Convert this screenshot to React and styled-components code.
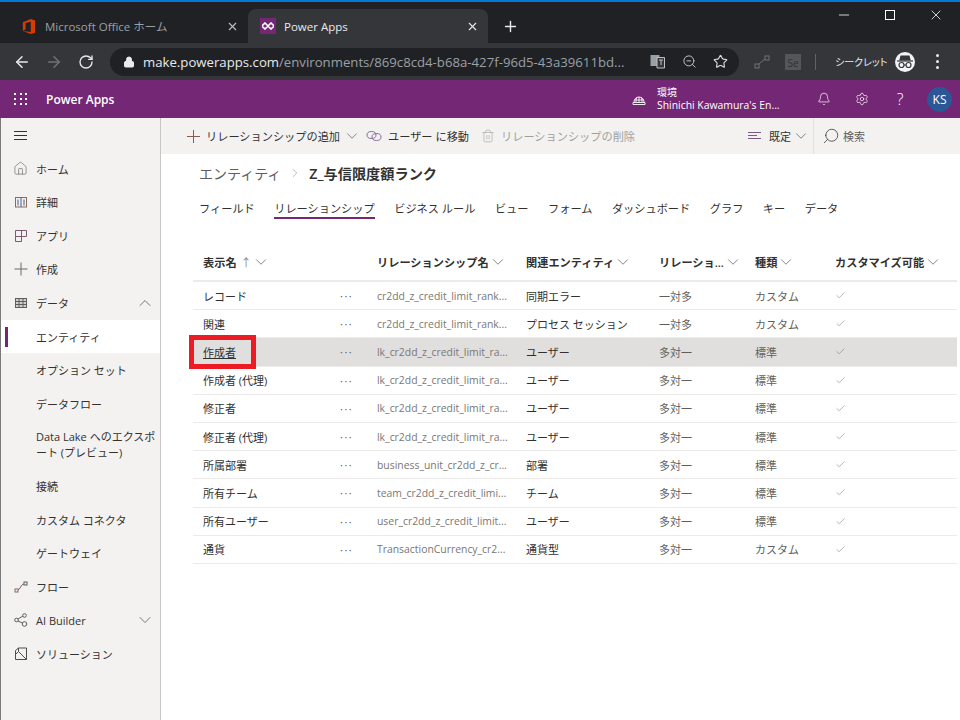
import styled, { createGlobalStyle } from "styled-components";
import {
  ArrowLeft,
  ArrowRight,
  RotateCw,
  Lock,
  ZoomOut,
  Star,
  X,
  Plus,
  Minus,
  ChevronDown,
  ChevronUp,
  ChevronRight,
  Check,
  Home,
  Search,
  Settings,
  Bell,
  Trash2,
} from "lucide-react";

const FONT = `"Open Sans", "Noto Sans CJK JP", sans-serif`;

const GlobalStyle = createGlobalStyle`
  html, body {
    margin: 0;
    padding: 0;
    background: #fff;
  }
  body {
    font-family: ${FONT};
    font-size: 11px;
    color: #323130;
  }
  * {
    box-sizing: border-box;
  }
`;

const NAV = [
  { label: "ホーム", icon: "home" },
  { label: "詳細", icon: "book" },
  { label: "アプリ", icon: "apps" },
  { label: "作成", icon: "plus" },
  { label: "データ", icon: "table", chevron: "up" },
  { label: "エンティティ", sub: true, active: true },
  { label: "オプション セット", sub: true },
  { label: "データフロー", sub: true },
  { label: "Data Lake へのエクスポート (プレビュー)", sub: true, tall: true },
  { label: "接続", sub: true },
  { label: "カスタム コネクタ", sub: true },
  { label: "ゲートウェイ", sub: true },
  { label: "フロー", icon: "flow" },
  { label: "AI Builder", icon: "ai", chevron: "down" },
  { label: "ソリューション", icon: "solution" },
];

const TABS = ["フィールド", "リレーションシップ", "ビジネス ルール", "ビュー", "フォーム", "ダッシュボード", "グラフ", "キー", "データ"];

const COLUMNS = [
  { label: "表示名", sort: true },
  { label: "" },
  { label: "リレーションシップ名", arrow: true },
  { label: "関連エンティティ", arrow: true },
  { label: "リレーショ...", arrow: true },
  { label: "種類", arrow: true },
  { label: "カスタマイズ可能", arrow: true },
];

const ROWS = [
  ["レコード", "cr2dd_z_credit_limit_rank...", "同期エラー", "一対多", "カスタム"],
  ["関連", "cr2dd_z_credit_limit_rank...", "プロセス セッション", "一対多", "カスタム"],
  ["作成者", "lk_cr2dd_z_credit_limit_ra...", "ユーザー", "多対一", "標準"],
  ["作成者 (代理)", "lk_cr2dd_z_credit_limit_ra...", "ユーザー", "多対一", "標準"],
  ["修正者", "lk_cr2dd_z_credit_limit_ra...", "ユーザー", "多対一", "標準"],
  ["修正者 (代理)", "lk_cr2dd_z_credit_limit_ra...", "ユーザー", "多対一", "標準"],
  ["所属部署", "business_unit_cr2dd_z_cr...", "部署", "多対一", "標準"],
  ["所有チーム", "team_cr2dd_z_credit_limi...", "チーム", "多対一", "標準"],
  ["所有ユーザー", "user_cr2dd_z_credit_limit...", "ユーザー", "多対一", "標準"],
  ["通貨", "TransactionCurrency_cr2...", "通貨型", "多対一", "カスタム"],
];

const NavIcon = ({ name }) => {
  const common = { width: 16, height: 16, viewBox: "0 0 16 16", fill: "none", stroke: "#605e5c", strokeWidth: 1 };
  switch (name) {
    case "home":
      return <Home size={15} strokeWidth={1} color="#605e5c" />;
    case "book":
      return (
        <svg {...common}>
          <rect x="2.500" y="3.500" width="11" height="9.500" stroke="#8a6a5c" />
          <path d="M8 3.500v9.500M5 5.500v6M11 5.500v6" stroke="#4a5a8a" />
        </svg>
      );
    case "apps":
      return (
        <svg {...common}>
          <path d="M2.500 2.500h11v6h-11zM8.500 2.500v6M2.500 8.500v5h6v-5" stroke="#7a5a70" />
        </svg>
      );
    case "plus":
      return (
        <svg {...common}>
          <path d="M8 1.500v13M1.500 8h13" stroke="#6a6a60" />
        </svg>
      );
    case "table":
      return (
        <svg {...common}>
          <rect x="2.500" y="3.500" width="11" height="9" fill="#d2d0ce" />
          <path d="M2.500 6.500h11M2.500 9.500h11M6 3.500v9M10 3.500v9" />
        </svg>
      );
    case "flow":
      return (
        <svg {...common}>
          <rect x="2" y="10" width="3" height="3" stroke="#8a6a5c" />
          <rect x="11" y="3" width="3" height="3" />
          <path d="M5 10.500C8 10 7 6 11 5" />
        </svg>
      );
    case "ai":
      return (
        <svg {...common}>
          <circle cx="3.500" cy="8" r="1.800" />
          <circle cx="11.500" cy="3.500" r="1.800" />
          <circle cx="11.500" cy="12" r="2.300" />
          <path d="M5 7l5-3M5 9l4.500 2" />
        </svg>
      );
    case "solution":
      return (
        <svg {...common}>
          <path d="M2.500 4.500l3-2.500h8v11.500h-11zM2.500 8.500l3-3 8 8M5.500 2v3.500" stroke="#4f4d4b" />
        </svg>
      );
    default:
      return null;
  }
};

export default function App() {
  return (
    <Window>
      <GlobalStyle />
      <TabStrip>
        <BrowserTab>
          <svg width="14" height="17" viewBox="0 0 16 18">
            <path d="M1 4l9-3.500 5 1.500v14l-5 1.500-9-3.500 9 1.300V3.600L4 5v7.500L1 14z" fill="#d83b01" />
          </svg>
          <TabTitle>Microsoft Office ホーム</TabTitle>
          <TabClose><X size={13} strokeWidth={2} color="#bdc1c6" /></TabClose>
        </BrowserTab>
        <BrowserTab active>
          <Favicon>
            <svg width="12" height="8" viewBox="0 0 12 8">
              <path d="M3 1l3 3-3 3-3-3zM9 1l3 3-3 3-3-3z" fill="none" stroke="#fff" strokeWidth="1.600" />
            </svg>
          </Favicon>
          <TabTitle active>Power Apps</TabTitle>
          <TabClose><X size={13} strokeWidth={2} color="#e8eaed" /></TabClose>
        </BrowserTab>
        <NewTab><Plus size={17} strokeWidth={2} color="#e8eaed" /></NewTab>
        <WindowControls>
          <WindowButton><Minus size={16} strokeWidth={1.200} color="#fff" /></WindowButton>
          <WindowButton>
            <svg width="10" height="10" viewBox="0 0 10 10" fill="none" stroke="#fff">
              <rect x="0.500" y="0.500" width="9" height="9" />
            </svg>
          </WindowButton>
          <WindowButton><X size={16} strokeWidth={1.200} color="#fff" /></WindowButton>
        </WindowControls>
      </TabStrip>

      <Toolbar>
        <ToolButton><ArrowLeft size={18} strokeWidth={2} color="#e8eaed" /></ToolButton>
        <ToolButton><ArrowRight size={18} strokeWidth={2} color="#6f7276" /></ToolButton>
        <ToolButton><RotateCw size={16} strokeWidth={2} color="#e8eaed" /></ToolButton>
        <AddressBar>
          <Lock size={12} fill="#e8eaed" color="#e8eaed" />
          <Url><b>make.powerapps.com</b>/environments/869c8cd4-b68a-427f-96d5-43a39611bd...</Url>
          <AddressIcons>
            <svg width="15" height="15" viewBox="0 0 15 15">
              <rect x="0.500" y="1" width="9" height="11" fill="#9aa0a6" />
              <path d="M7 3.500h7.500v10.500H7z" fill="#35363a" stroke="#bdc1c6" />
              <path d="M9 6h4M11 6v5" stroke="#bdc1c6" />
            </svg>
            <ZoomOut size={15} strokeWidth={1.600} color="#bdc1c6" />
            <Star size={15} strokeWidth={1.800} color="#dadce0" />
          </AddressIcons>
        </AddressBar>
        <Extensions>
          <svg width="16" height="16" viewBox="0 0 16 16" fill="none" stroke="#6f7276">
            <rect x="1" y="10" width="4" height="4" />
            <rect x="11" y="2" width="4" height="4" />
            <path d="M5 10l6-5" />
          </svg>
          <SeBadge>Se</SeBadge>
          <ToolDivider />
          <Incognito>シークレット</Incognito>
          <IncognitoBadge>
            <svg width="18" height="14" viewBox="0 0 18 14" fill="none" stroke="#35363a" strokeWidth="1.200">
              <path d="M5 1h8l1 4H4z" fill="#35363a" />
              <path d="M1 6h16" />
              <circle cx="5.500" cy="10" r="2.500" />
              <circle cx="12.500" cy="10" r="2.500" />
              <path d="M8 10h2" />
            </svg>
          </IncognitoBadge>
          <Kebab><i /><i /><i /></Kebab>
        </Extensions>
      </Toolbar>

      <AppHeader>
        <Waffle>
          {Array.from({ length: 9 }).map((_, i) => <i key={i} />)}
        </Waffle>
        <AppName>Power Apps</AppName>
        <EnvIcon>
          <svg width="16" height="16" viewBox="0 0 16 16" fill="none" stroke="#fff" strokeWidth="0.900">
            <path d="M3 11a5 5 0 0 1 10 0M8 6v5M5.500 6.500C5 8 5 9.500 5 11M10.500 6.500c.5 1.500.5 3 .5 4.500M3.500 9h9" />
            <path d="M2 11.500h12v2H2z" />
          </svg>
        </EnvIcon>
        <EnvInfo>
          <span>環境</span>
          <span>Shinichi Kawamura's En...</span>
        </EnvInfo>
        <HeaderIcon><Bell size={14} strokeWidth={1.200} color="#fff" /></HeaderIcon>
        <HeaderIcon><Settings size={14} strokeWidth={1.200} color="#fff" /></HeaderIcon>
        <HeaderIcon><HelpMark>?</HelpMark></HeaderIcon>
        <Avatar>KS</Avatar>
      </AppHeader>

      <Body>
        <Sidebar>
          <Hamburger>
            <svg width="13" height="9" viewBox="0 0 13 9" stroke="#323130">
              <path d="M0 0.500h13M0 4.500h13M0 8.500h13" />
            </svg>
          </Hamburger>
          {NAV.map((item) => (
            <NavItem key={item.label} active={item.active} tall={item.tall}>
              <NavIconSlot>{item.icon && <NavIcon name={item.icon} />}</NavIconSlot>
              <NavLabel tall={item.tall}>{item.label}</NavLabel>
              {item.chevron === "up" && <ChevronUp size={20} strokeWidth={1} color="#605e5c" />}
              {item.chevron === "down" && <ChevronDown size={20} strokeWidth={1} color="#605e5c" />}
            </NavItem>
          ))}
        </Sidebar>

        <Main>
          <CommandBar>
            <Command>
              <svg width="13" height="13" viewBox="0 0 13 13" stroke="#8a5a50">
                <path d="M6.500 0v13M0 6.500h13" />
              </svg>
              <CommandLabel>リレーションシップの追加</CommandLabel>
              <CommandChevron><ChevronDown size={18} strokeWidth={1} color="#605e5c" /></CommandChevron>
            </Command>
            <Command>
              <svg width="16" height="12" viewBox="0 0 16 12" fill="none" stroke="#8a6a9a">
                <ellipse cx="5.500" cy="5" rx="4.500" ry="3.500" />
                <ellipse cx="10.500" cy="7" rx="4.500" ry="3.500" />
              </svg>
              <CommandLabel>ユーザー に移動</CommandLabel>
            </Command>
            <Command disabled>
              <Trash2 size={14} strokeWidth={1} color="#a19f9d" />
              <CommandLabel>リレーションシップの削除</CommandLabel>
            </Command>
            <ViewPicker>
              <svg width="14" height="10" viewBox="0 0 14 10" fill="none" stroke="#7a5a80">
                <path d="M0 1.500h13M0 4.500h9M0 7.500h13" />
              </svg>
              <span>既定</span>
              <CommandChevron><ChevronDown size={18} strokeWidth={1} color="#605e5c" /></CommandChevron>
            </ViewPicker>
            <SearchBox>
              <Search size={18} strokeWidth={1} color="#323130" style={{ transform: "scaleX(-1)" }} />
              <span>検索</span>
            </SearchBox>
          </CommandBar>

          <Content>
            <Breadcrumb>
              <Crumb>エンティティ</Crumb>
              <ChevronRight size={14} strokeWidth={1} color="#8a8886" />
              <CurrentCrumb>Z_与信限度額ランク</CurrentCrumb>
            </Breadcrumb>
            <Tabs>
              {TABS.map((t) => (
                <Tab key={t} active={t === "リレーションシップ"}>{t}</Tab>
              ))}
            </Tabs>
            <Table>
              <HeaderRow>
                {COLUMNS.map((c, i) => (
                  <HeaderCell key={i}>
                    {c.label}
                    {c.sort && <SortArrow>↑</SortArrow>}
                    {(c.sort || c.arrow) && <ChevronDown size={18} strokeWidth={1} color="#605e5c" />}
                  </HeaderCell>
                ))}
              </HeaderRow>
              {ROWS.map((row) => {
                const selected = row[0] === "作成者";
                return (
                  <Row key={row[0]} selected={selected}>
                    <NameCell selected={selected}>
                      {row[0]}
                      {selected && <Highlight />}
                    </NameCell>
                    <Dots>···</Dots>
                    <SchemaCell>{row[1]}</SchemaCell>
                    <EntityCell>{row[2]}</EntityCell>
                    <Cell>{row[3]}</Cell>
                    <Cell>{row[4]}</Cell>
                    <Cell><Check size={11} strokeWidth={1} color="#605e5c" /></Cell>
                  </Row>
                );
              })}
            </Table>
          </Content>
        </Main>
      </Body>
    </Window>
  );
}

const Window = styled.div`
  width: 960px;
  height: 720px;
  overflow: hidden;
  display: flex;
  flex-direction: column;
  border-top: 2px solid #0078d4;
  background: #fff;
`;

const TabStrip = styled.div`
  height: 41px;
  flex: none;
  display: flex;
  align-items: flex-end;
  background: #202124;
  color: #fff;
`;

const BrowserTab = styled.div`
  width: ${(p) => (p.active ? "240px" : "248px")};
  height: 34px;
  display: flex;
  align-items: center;
  gap: ${(p) => (p.active ? "8px" : "9px")};
  padding: 0 9px 0 ${(p) => (p.active ? "12px" : "22px")};
  border-radius: 8px 8px 0 0;
  background: ${(p) => (p.active ? "#35363a" : "transparent")};
`;

const Favicon = styled.div`
  width: 16px;
  height: 16px;
  display: flex;
  align-items: center;
  justify-content: center;
  background: #742774;
`;

const TabTitle = styled.span`
  flex: 1;
  font-size: 11.5px;
  color: ${(p) => (p.active ? "#e8eaed" : "#9aa0a6")};
`;

const TabClose = styled.span`
  display: flex;
`;

const NewTab = styled.div`
  width: 44px;
  height: 34px;
  display: flex;
  align-items: center;
  justify-content: center;
`;

const WindowControls = styled.div`
  margin-left: auto;
  padding-right: 1px;
  align-self: flex-start;
  display: flex;
`;

const WindowButton = styled.div`
  width: 46px;
  height: 26px;
  display: flex;
  align-items: center;
  justify-content: center;
`;

const Toolbar = styled.div`
  height: 37px;
  flex: none;
  display: flex;
  align-items: center;
  padding-left: 6px;
  background: #35363a;
`;

const ToolButton = styled.div`
  width: 32px;
  height: 28px;
  display: flex;
  align-items: center;
  justify-content: center;
`;

const AddressBar = styled.div`
  width: 629px;
  height: 28px;
  margin-left: 8px;
  display: flex;
  align-items: center;
  padding-left: 13px;
  border-radius: 14px;
  background: #202124;
`;

const Url = styled.span`
  flex: 1;
  margin-left: 8px;
  font-size: 13.2px;
  white-space: nowrap;
  color: #9aa0a6;
  b {
    font-weight: 400;
    color: #e8eaed;
  }
`;

const AddressIcons = styled.div`
  width: 89px;
  display: flex;
  align-items: center;
  justify-content: space-between;
  padding-right: 11px;
`;

const Extensions = styled.div`
  flex: 1;
  display: flex;
  align-items: center;
  padding-left: 15px;
`;

const SeBadge = styled.span`
  width: 16px;
  height: 16px;
  margin-left: 15px;
  font-size: 10px;
  line-height: 19px;
  text-align: center;
  color: #2f3033;
  background: #55565a;
`;

const ToolDivider = styled.span`
  width: 1px;
  height: 16px;
  margin-left: 14px;
  background: #5f6368;
`;

const Incognito = styled.span`
  width: 51px;
  margin-left: 19px;
  font-size: 10px;
  font-feature-settings: "palt";
  white-space: nowrap;
  color: #e8eaed;
`;

const IncognitoBadge = styled.span`
  width: 20px;
  height: 20px;
  margin-left: 9px;
  display: flex;
  align-items: center;
  justify-content: center;
  border-radius: 50%;
  background: #f1f3f4;
`;

const Kebab = styled.span`
  margin-left: 21px;
  display: flex;
  flex-direction: column;
  gap: 3px;
  i {
    width: 3px;
    height: 3px;
    border-radius: 50%;
    background: #e8eaed;
  }
`;

const AppHeader = styled.div`
  height: 38px;
  flex: none;
  display: flex;
  align-items: center;
  padding-left: 14px;
  color: #fff;
  background: #742774;
`;

const Waffle = styled.div`
  width: 13px;
  display: grid;
  grid-template-columns: repeat(3, 2px);
  gap: 3px;
  justify-content: space-between;
  i {
    width: 2px;
    height: 2px;
    background: #fff;
  }
`;

const AppName = styled.span`
  margin-left: 19px;
  flex: 1;
  font-size: 12px;
  font-weight: 600;
`;

const EnvIcon = styled.span`
  display: flex;
  margin-right: 10px;
`;

const EnvInfo = styled.div`
  width: 148px;
  display: flex;
  flex-direction: column;
  font-size: 10px;
  line-height: 13px;
  white-space: nowrap;
  span + span {
    font-size: 10.4px;
  }
`;

const HeaderIcon = styled.span`
  width: 38px;
  display: flex;
  justify-content: center;
`;

const HelpMark = styled.span`
  font-size: 16px;
  font-weight: 300;
`;

const Avatar = styled.span`
  width: 25px;
  height: 25px;
  margin: 0 8px;
  display: flex;
  align-items: center;
  justify-content: center;
  border-radius: 50%;
  font-size: 12px;
  background: #2b5797;
`;

const Body = styled.div`
  flex: 1;
  min-height: 0;
  display: flex;
  border-left: 1px solid #7a7a7a;
`;

const Sidebar = styled.nav`
  width: 160px;
  flex: none;
  background: #f3f2f1;
  border-right: 1px solid #c8c6c4;
`;

const Hamburger = styled.div`
  height: 34px;
  padding-left: 13px;
  display: flex;
  align-items: center;
`;

const NavItem = styled.div`
  position: relative;
  height: ${(p) => (p.tall ? "49px" : "33.55px")};
  display: flex;
  align-items: center;
  padding-right: ${(p) => (p.tall ? "0" : "5px")};
  background: ${(p) => (p.active ? "#fff" : "transparent")};
  ${(p) =>
    p.active &&
    `&::before {
      content: "";
      position: absolute;
      left: 4px;
      top: 7px;
      width: 3px;
      height: 20px;
      background: #742774;
    }`}
`;

const NavIconSlot = styled.span`
  width: 35px;
  flex: none;
  padding-left: 12px;
  display: flex;
`;

const NavLabel = styled.span`
  flex: 1;
  font-size: 11px;
  line-break: ${(p) => (p.tall ? "loose" : "auto")};
  line-height: ${(p) => (p.tall ? "16px" : "normal")};
`;

const Main = styled.main`
  flex: 1;
  min-width: 0;
  display: flex;
  flex-direction: column;
`;

const CommandBar = styled.div`
  height: 36px;
  flex: none;
  display: flex;
  align-items: center;
  padding-left: 26px;
  background: #f3f2f1;
`;

const Command = styled.div`
  display: flex;
  align-items: center;
  margin-right: 12px;
  font-size: 11.2px;
  color: ${(p) => (p.disabled ? "#a19f9d" : "#323130")};
`;

const CommandLabel = styled.span`
  margin-left: 6px;
`;

const CommandChevron = styled.span`
  display: flex;
  margin-left: 3px;
  margin-right: -7px;
`;

const ViewPicker = styled.div`
  margin-left: auto;
  height: 36px;
  width: 65px;
  display: flex;
  align-items: center;
  gap: 7px;
  font-size: 11px;
  ${CommandChevron} {
    margin-left: -6px;
  }
`;

const SearchBox = styled.div`
  width: 147px;
  height: 36px;
  display: flex;
  align-items: center;
  gap: 3px;
  padding-left: 8px;
  font-size: 11px;
  border-left: 1px solid #e1dfdd;
  color: #605e5c;
`;

const Content = styled.div`
  flex: 1;
  padding: 9px 3px 0 32px;
`;

const Breadcrumb = styled.div`
  margin-left: 6px;
  height: 20px;
  display: flex;
  align-items: center;
  gap: 7px;
`;

const Crumb = styled.span`
  font-size: 14px;
  color: #605e5c;
`;

const CurrentCrumb = styled.span`
  font-size: 14.2px;
  font-weight: 600;
  color: #323130;
`;

const Tabs = styled.div`
  display: flex;
  gap: 19.5px;
  margin: 18px 0 0 6px;
`;

const Tab = styled.span`
  height: 18px;
  font-size: 11.2px;
  line-height: 16px;
  color: #323130;
  border-bottom: 2px solid ${(p) => (p.active ? "#742774" : "transparent")};
`;

const GRID = "137px 37px 149px 133px 96px 80px 1fr";

const Table = styled.div`
  margin-top: 24px;
`;

const HeaderRow = styled.div`
  height: 39px;
  display: grid;
  grid-template-columns: ${GRID};
  align-items: center;
  padding-left: 10px;
  border-bottom: 2px solid #edebe9;
`;

const HeaderCell = styled.div`
  display: flex;
  align-items: center;
  font-size: 11.2px;
  font-weight: 600;
  white-space: nowrap;
`;

const SortArrow = styled.span`
  margin-left: 4px;
  font-weight: 400;
  color: #8a8886;
`;

const Row = styled.div`
  height: 28.2px;
  display: grid;
  grid-template-columns: ${GRID};
  align-items: center;
  padding-left: 10px;
  border-bottom: 1px solid #edebe9;
  background: ${(p) => (p.selected ? "#e1dfdd" : "transparent")};
`;

const Cell = styled.div`
  display: flex;
  align-items: center;
  font-size: 11px;
  color: #605e5c;
  white-space: nowrap;
`;

const NameCell = styled.div`
  position: relative;
  font-size: 11px;
  color: #323130;
  text-decoration: ${(p) => (p.selected ? "underline" : "none")};
`;

const Highlight = styled.span`
  position: absolute;
  left: -14px;
  top: -9px;
  width: 67px;
  height: 34px;
  border: 5px solid #ed1c24;
`;

const Dots = styled.div`
  font-size: 11px;
  letter-spacing: 1.5px;
  color: #605e5c;
`;

const SchemaCell = styled(Cell)`
  font-size: 10.4px;
  color: #797775;
`;

const EntityCell = styled(Cell)`
  color: #323130;
`;
